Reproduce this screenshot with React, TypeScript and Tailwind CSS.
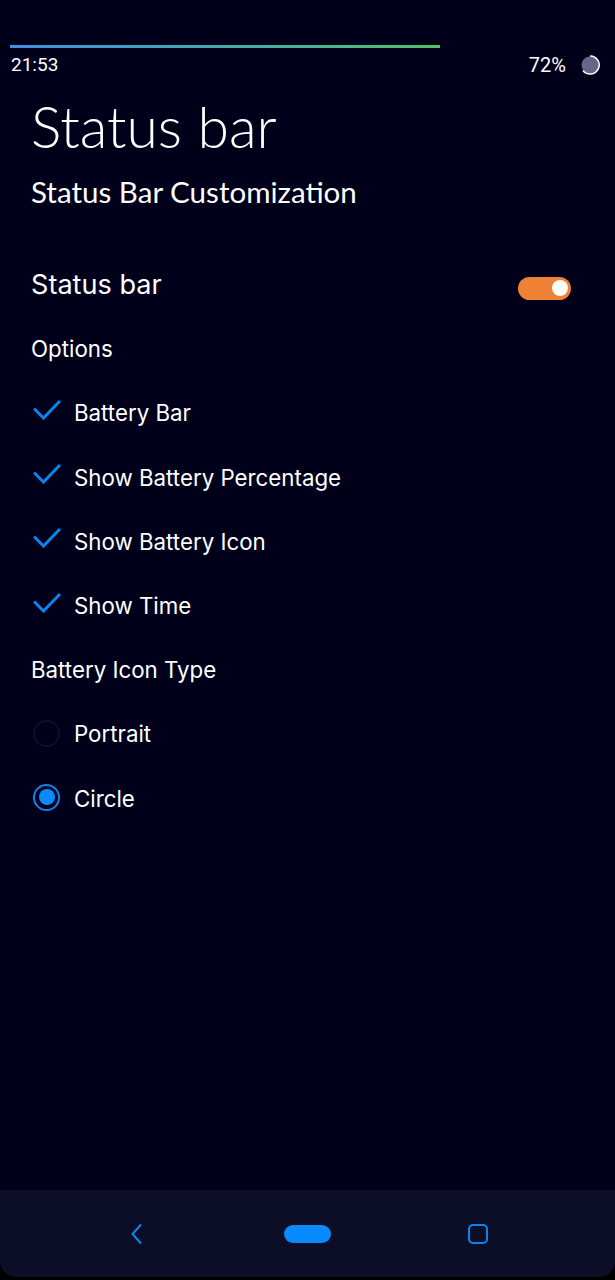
const checks = ["Battery Bar", "Show Battery Percentage", "Show Battery Icon", "Show Time"]

function CheckRow({ label }: { label: string }) {
  return (
    <div className="flex h-[64.2px] items-center">
      <svg width="28" height="20" viewBox="0 0 28 20" fill="none" className="ml-[2px] -translate-y-[3px]">
        <path d="M1 8.5 L10.5 18 L27 1" stroke="#0a84f0" strokeWidth="3" />
      </svg>
      <span className="ml-[13px] text-[22.3px] text-white">{label}</span>
    </div>
  )
}

function RadioRow({ label, on }: { label: string; on?: boolean }) {
  return (
    <div className="flex h-[64.2px] items-center">
      {on ? (
        <div className="ml-[2px] flex h-[27px] w-[27px] -translate-y-[1px] items-center justify-center rounded-full border-[2.5px] border-[#0a84f0]">
          <div className="h-[16px] w-[16px] rounded-full bg-[#0a8aff]" />
        </div>
      ) : (
        <div className="ml-[2px] h-[27px] w-[27px] -translate-y-[1px] rounded-full border-2 border-[#0d0f28]" />
      )}
      <span className="ml-[14px] text-[22.3px] text-white">{label}</span>
    </div>
  )
}

export default function App() {
  return (
    <div className="relative flex h-[1280px] w-[615px] flex-col overflow-hidden bg-black pb-[3px] font-['Inter',sans-serif]">
      <svg width="10" height="6" viewBox="0 0 10 6" className="absolute left-0 top-[45px]">
        <path d="M0 0 L10 0 L0 5 Z" fill="#000000" />
      </svg>
      <div className="flex flex-1 flex-col overflow-hidden bg-[#00001a] pt-[45px]">
        <div className="ml-[10px] h-[3px] w-[430px] bg-gradient-to-r from-[#3f8fe0] to-[#52c265]" />
        <div className="flex h-[34px] items-center justify-between pl-[11px] pr-[15px]">
          <span className="font-['Roboto',sans-serif] text-[19px] text-white">21:53</span>
          <div className="flex items-center gap-[14px]">
            <span className="font-['Roboto',sans-serif] text-[20px] text-white">72%</span>
            <svg width="20" height="20" viewBox="0 0 20 20">
              <circle cx="10" cy="10" r="8.5" fill="#67658a" />
              <path d="M10 1 A9 9 0 1 1 3 15.5" fill="none" stroke="#ffffff" strokeWidth="1.6" />
            </svg>
          </div>
        </div>

        <div className="px-[31px]">
          <h1 className="mt-[12px] font-['Lato',sans-serif] text-[57px] font-light leading-[64px] text-white">Status bar</h1>
          <h2 className="mt-[16px] font-['Lato',sans-serif] text-[29.55px] font-normal leading-[36px] text-white">Status Bar Customization</h2>

          <div className="mt-[43px] flex h-[64px] items-center justify-between pr-[13px]">
            <span className="text-[27.1px] text-white">Status bar</span>
            <div className="mt-[6px] flex h-[23px] w-[53px] items-center justify-end rounded-full bg-[#ee8133] pr-[3px]">
              <div className="h-[16px] w-[16px] rounded-full bg-white" />
            </div>
          </div>

          <div className="flex h-[64px] items-center text-[22.3px] text-white">Options</div>
          {checks.map((label) => (
            <CheckRow key={label} label={label} />
          ))}
          <div className="flex h-[64.2px] items-center text-[22.3px] text-white">Battery Icon Type</div>
          <RadioRow label="Portrait" />
          <RadioRow label="Circle" on />
        </div>
      </div>

      <div className="flex h-[87px] items-center rounded-b-[16px] bg-[#0c0e28]">
        <div className="flex w-full items-center justify-between pl-[129px] pr-[127px]">
          <svg width="18" height="22" viewBox="0 0 18 22" fill="none">
            <path d="M12 1.5 L3.5 11 L12 20.5" stroke="#0a84f0" strokeWidth="2" />
          </svg>
          <div className="h-[18px] w-[47px] rounded-full bg-[#0a8aff]" />
          <div className="h-[20px] w-[20px] rounded-[5px] border-2 border-[#0a84f0]" />
        </div>
      </div>
    </div>
  )
}
